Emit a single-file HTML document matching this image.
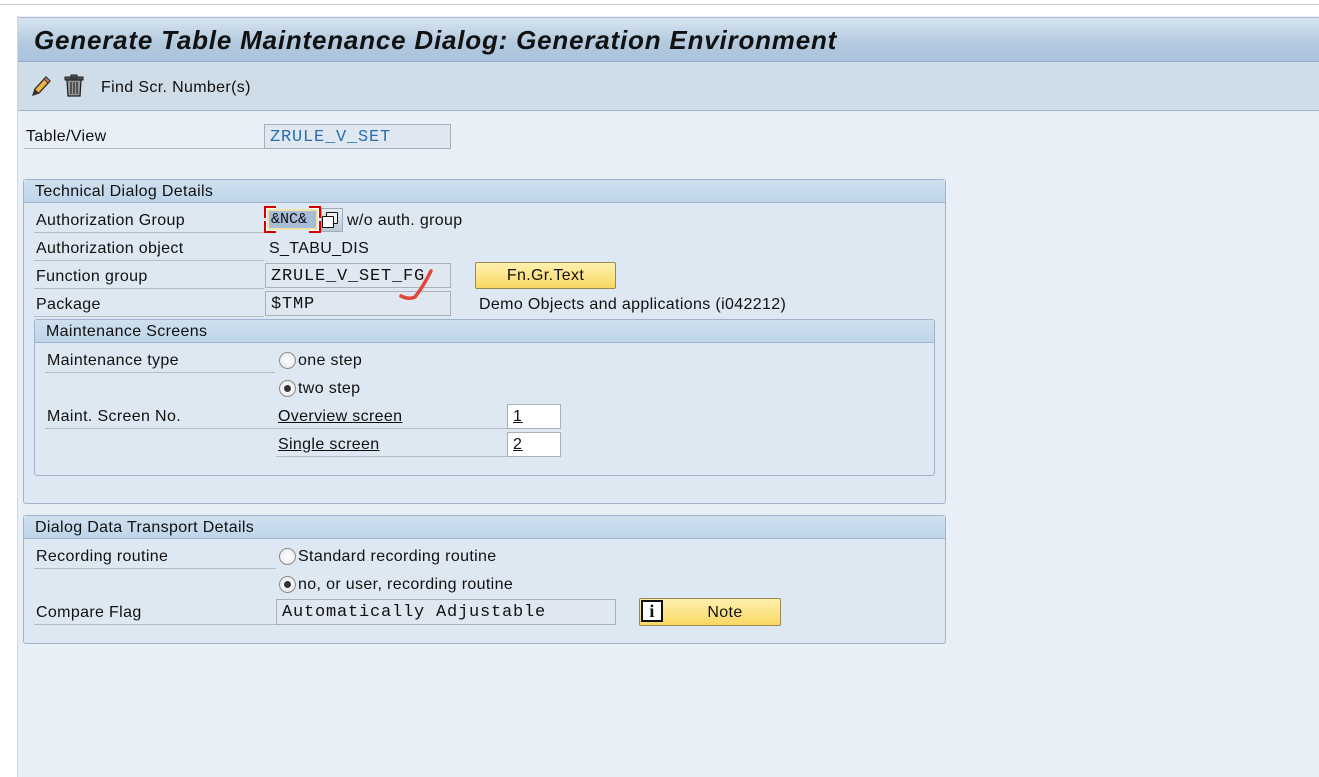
<!DOCTYPE html>
<html><head><style>
body{margin:0;width:1319px;height:777px;background:#fff;position:relative;overflow:hidden;font-family:"Liberation Sans",sans-serif;font-size:16px;letter-spacing:0.35px;color:#111}
.a{position:absolute}
.lbl{position:absolute;line-height:18px;margin-top:1px}
.ul{position:absolute;height:1px;background:#b5bcc4}
.inp{position:absolute;box-sizing:border-box;border:1px solid #a9b0b7;background:#dfe8f0;font-family:"Liberation Mono",monospace;font-size:17px;letter-spacing:0.8px;line-height:25px;padding-left:5px}
.grp{position:absolute;box-sizing:border-box;border:1px solid #9fb4ca;border-radius:3px;background:#dde8f2}
.gh{position:absolute;left:0;right:0;top:0;height:23px;background:linear-gradient(#cfe0ef,#bed5ea);border-bottom:1px solid #9fb4ca;padding-left:11px;line-height:24px;box-sizing:border-box}
.rad{position:absolute;width:17px;height:17px;border-radius:50%;border:1px solid #8a8a8a;background:radial-gradient(#fff,#e6e6e6);box-sizing:border-box}
.rad.on::after{content:"";position:absolute;left:4px;top:4px;width:7px;height:7px;border-radius:50%;background:#333}
.btn{position:absolute;box-sizing:border-box;border:1px solid #9a8a50;border-radius:2px;background:linear-gradient(#fff0b0,#f9d861);text-align:center;line-height:26px}
</style></head><body>
<div class="a" style="left:0;top:4px;width:1319px;height:1px;background:#c9cfd6"></div>
<div class="a" style="left:17px;top:16px;width:1302px;height:761px;background:#e8eff7;border-left:1px solid #d0d8e0"></div>
<div class="a" style="left:18px;top:17px;width:1301px;height:45px;background:linear-gradient(#d6e4f0,#b2c9df 60%,#aac2dc);border-top:1px solid #b0bccb;border-bottom:1px solid #98aec6;box-sizing:border-box"></div>
<div class="a" style="left:34px;top:24px;font-size:26px;letter-spacing:0.8px;font-weight:bold;font-style:italic;line-height:32px">Generate Table Maintenance Dialog: Generation Environment</div>
<div class="a" style="left:18px;top:62px;width:1301px;height:49px;background:#cfdde8;border-bottom:1px solid #a5b5c6;box-sizing:border-box"></div>
<svg class="a" style="left:30px;top:74px" width="22" height="24" viewBox="0 0 22 24"><path d="M3 21 L5 15 L16 3 L20 7 L9 19 Z" fill="#f3b33a" stroke="#333" stroke-width="1.3"/><path d="M16 3 L20 7 L18 9 L14 5Z" fill="#e87a7a" stroke="#333"/><path d="M3 21 L5 15 L9 19Z" fill="#333"/></svg>
<svg class="a" style="left:63px;top:74px" width="22" height="24" viewBox="0 0 22 24"><rect x="2" y="3" width="18" height="3" fill="#555" stroke="#222"/><rect x="8" y="1" width="6" height="3" fill="#555" stroke="#222"/><path d="M4 6 L5 22 L17 22 L18 6Z" fill="#999" stroke="#222" stroke-width="1.3"/><path d="M8 8V20M11 8V20M14 8V20" stroke="#333" stroke-width="1.4"/></svg>
<div class="lbl" style="left:101px;top:78px">Find Scr. Number(s)</div>

<div class="lbl" style="left:26px;top:127px">Table/View</div>
<div class="ul" style="left:24px;top:148px;width:240px"></div>
<div class="inp" style="left:264px;top:124px;width:187px;height:25px;color:#2a6db0">ZRULE_V_SET</div>

<div class="grp" style="left:23px;top:179px;width:923px;height:325px"><div class="gh">Technical Dialog Details</div></div>
<div class="lbl" style="left:36px;top:211px">Authorization Group</div>
<div class="ul" style="left:34px;top:232px;width:230px"></div>
<div class="a" style="left:264px;top:206px;width:57px;height:27px;border:2px solid #d40000;box-sizing:border-box;background:#fff"></div>
<div class="a" style="left:276px;top:206px;width:33px;height:27px;background:#dde8f2"></div>
<div class="a" style="left:264px;top:218px;width:57px;height:3px;background:#dde8f2"></div>
<div class="inp" style="left:267px;top:209px;width:51px;height:21px;background:#a7bcd6;border:2px solid #efe3a8;line-height:18px;padding-left:2px;font-size:15px;letter-spacing:0">&amp;NC&amp;</div>
<div class="a" style="left:321px;top:208px;width:22px;height:24px;background:linear-gradient(#e6edf4,#b9c8d7);border:1px solid #a0acb8;box-sizing:border-box"></div>
<div class="a" style="left:326px;top:212px;width:10px;height:10px;border:1.5px solid #111;border-radius:1px;background:#eee"></div>
<div class="a" style="left:322px;top:216px;width:10px;height:10px;border:1.5px solid #111;border-radius:1px;background:#fff"></div>
<div class="lbl" style="left:347px;top:211px">w/o auth. group</div>
<div class="lbl" style="left:36px;top:239px">Authorization object</div>
<div class="ul" style="left:34px;top:260px;width:230px"></div>
<div class="lbl" style="left:269px;top:239px">S_TABU_DIS</div>
<div class="lbl" style="left:36px;top:267px">Function group</div>
<div class="ul" style="left:34px;top:288px;width:230px"></div>
<div class="inp" style="left:265px;top:263px;width:186px;height:25px">ZRULE_V_SET_FG</div>
<div class="btn" style="left:475px;top:262px;width:141px;height:27px">Fn.Gr.Text</div>
<div class="lbl" style="left:36px;top:295px">Package</div>
<div class="ul" style="left:34px;top:316px;width:230px"></div>
<div class="inp" style="left:265px;top:291px;width:186px;height:25px">$TMP</div>
<div class="lbl" style="left:479px;top:295px">Demo Objects and applications (i042212)</div>
<svg class="a" style="left:395px;top:262px" width="50" height="42"><path d="M6 34 Q14 38 20 35 Q28 25 36 9" fill="none" stroke="#e0463a" stroke-width="3.5" stroke-linecap="round"/></svg>

<div class="grp" style="left:34px;top:319px;width:901px;height:157px"><div class="gh">Maintenance Screens</div></div>
<div class="lbl" style="left:47px;top:351px">Maintenance type</div>
<div class="ul" style="left:45px;top:372px;width:230px"></div>
<div class="rad" style="left:279px;top:352px"></div><div class="lbl" style="left:298px;top:351px">one step</div>
<div class="rad on" style="left:279px;top:380px"></div><div class="lbl" style="left:298px;top:379px">two step</div>
<div class="lbl" style="left:47px;top:407px">Maint. Screen No.</div>
<div class="ul" style="left:45px;top:428px;width:462px"></div>
<div class="lbl" style="left:278px;top:407px;text-decoration:underline">Overview screen</div>
<div class="inp" style="left:507px;top:404px;width:54px;height:25px;background:#fff;font-family:'Liberation Sans',sans-serif;font-size:16px;line-height:23px;text-decoration:underline">1</div>
<div class="lbl" style="left:278px;top:435px;text-decoration:underline">Single screen</div>
<div class="ul" style="left:276px;top:456px;width:231px"></div>
<div class="inp" style="left:507px;top:432px;width:54px;height:25px;background:#fff;font-family:'Liberation Sans',sans-serif;font-size:16px;line-height:23px;text-decoration:underline">2</div>

<div class="grp" style="left:23px;top:515px;width:923px;height:129px"><div class="gh">Dialog Data Transport Details</div></div>
<div class="lbl" style="left:36px;top:547px">Recording routine</div>
<div class="ul" style="left:34px;top:568px;width:242px"></div>
<div class="rad" style="left:279px;top:548px"></div><div class="lbl" style="left:298px;top:547px">Standard recording routine</div>
<div class="rad on" style="left:279px;top:576px"></div><div class="lbl" style="left:298px;top:575px">no, or user, recording routine</div>
<div class="lbl" style="left:36px;top:603px">Compare Flag</div>
<div class="ul" style="left:34px;top:624px;width:242px"></div>
<div class="inp" style="left:276px;top:599px;width:340px;height:26px">Automatically Adjustable</div>
<div class="btn" style="left:639px;top:598px;width:142px;height:28px;line-height:27px;padding-left:30px">Note</div>
<div class="a" style="left:641px;top:600px;width:22px;height:22px;background:#fff;border:2px solid #111;box-sizing:border-box;font:bold 18px 'Liberation Serif',serif;text-align:center;line-height:18px">i</div>
</body></html>
